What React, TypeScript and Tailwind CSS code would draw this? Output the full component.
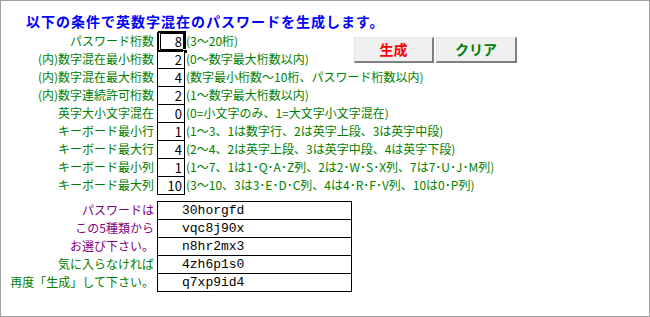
import React from 'react';

const params = [
  { label: 'パスワード桁数', value: '8', hint: '(3〜20桁)' },
  { label: '(内)数字混在最小桁数', value: '2', hint: '(0〜数字最大桁数以内)' },
  { label: '(内)数字混在最大桁数', value: '4', hint: '(数字最小桁数〜10桁、パスワード桁数以内)' },
  { label: '(内)数字連続許可桁数', value: '2', hint: '(1〜数字最大桁数以内)' },
  { label: '英字大小文字混在', value: '0', hint: '(0=小文字のみ、1=大文字小文字混在)' },
  { label: 'キーボード最小行', value: '1', hint: '(1〜3、1は数字行、2は英字上段、3は英字中段)' },
  { label: 'キーボード最大行', value: '4', hint: '(2〜4、2は英字上段、3は英字中段、4は英字下段)' },
  { label: 'キーボード最小列', value: '1', hint: '(1〜7、1は1･Q･A･Z列、2は2･W･S･X列、7は7･U･J･M列)' },
  { label: 'キーボード最大列', value: '10', hint: '(3〜10、3は3･E･D･C列、4は4･R･F･V列、10は0･P列)' },
];

const results = [
  { label: 'パスワードは', pw: '30horgfd', purple: true },
  { label: 'この5種類から', pw: 'vqc8j90x', purple: true },
  { label: 'お選び下さい。', pw: 'n8hr2mx3', purple: true },
  { label: '気に入らなければ', pw: '4zh6p1s0', purple: false },
  { label: '再度「生成」して下さい。', pw: 'q7xp9id4', purple: false },
];

export default function App() {
  return (
    <div className="relative w-[650px] h-[317px] border border-[#a0a0a0] bg-white font-['Noto_Sans_CJK_JP',sans-serif]">
      {/* Title */}
      <div className="h-[31px] pt-[11px] pl-[25px] text-[14px] leading-[18px] font-bold tracking-[1px] text-[#0000ff] whitespace-nowrap">
        以下の条件で英数字混在のパスワードを生成します。
      </div>

      {/* Parameters */}
      <div className="flex flex-col">
        {params.map((p, i) => {
          const last = i === params.length - 1;
          return (
            <div key={p.label} className="flex">
              <div className="w-[156px] h-[18px] pr-[3px] text-right text-[12px] leading-[18px] text-[#008000] whitespace-nowrap">
                {p.label}
              </div>
              <div
                className={
                  last
                    ? 'relative w-[28px] h-[19px] border border-black pr-[2px] text-right text-[13px] leading-[17px] text-black'
                    : 'relative w-[28px] h-[18px] border-x border-t border-black pr-[2px] text-right text-[13px] leading-[17px] text-black'
                }
              >
                {p.value}
                {i === 0 && (
                  <div className="absolute left-[0px] top-[-2px] w-[28px] h-[21px] border border-black">
                    <div className="absolute inset-[1px] border border-black" />
                    <div className="absolute right-[-3px] bottom-[-3px] w-[5px] h-[5px] bg-black border border-white" />
                  </div>
                )}
              </div>
              <div className="h-[18px] pl-[1px] text-[12px] leading-[18px] text-[#008000] whitespace-nowrap">
                {p.hint}
              </div>
            </div>
          );
        })}
      </div>

      {/* Results */}
      <div className="mt-[6px] flex flex-col">
        {results.map((r, i) => {
          const last = i === results.length - 1;
          return (
            <div key={r.pw} className="flex">
              <div
                className={
                  r.purple
                    ? 'w-[156px] h-[18px] pr-[3px] text-right text-[12px] leading-[18px] text-[#800080] whitespace-nowrap'
                    : 'w-[156px] h-[18px] pr-[3px] text-right text-[12px] leading-[18px] text-[#008000] whitespace-nowrap'
                }
              >
                {r.label}
              </div>
              <div
                className={
                  last
                    ? "w-[195px] h-[19px] border border-black pl-[24px] font-['Liberation_Mono',monospace] text-[13px] leading-[17px] text-black"
                    : "w-[195px] h-[18px] border-x border-t border-black pl-[24px] font-['Liberation_Mono',monospace] text-[13px] leading-[17px] text-black"
                }
              >
                {r.pw}
              </div>
            </div>
          );
        })}
      </div>

      {/* Buttons (floating form controls) */}
      <div className="absolute left-[353px] top-[36px] flex gap-[2px]">
        <button className="w-[80px] h-[26px] bg-[#f0f0f0] border-t border-l border-[#e3e3e3] border-b-2 border-r-2 border-b-[#808080] border-r-[#808080] text-[14px] font-bold text-[#ff0000]">
          生成
        </button>
        <button className="w-[81px] h-[26px] bg-[#f0f0f0] border-t border-l border-[#e3e3e3] border-b-2 border-r-2 border-b-[#808080] border-r-[#808080] text-[14px] font-bold text-[#008000]">
          クリア
        </button>
      </div>
    </div>
  );
}
